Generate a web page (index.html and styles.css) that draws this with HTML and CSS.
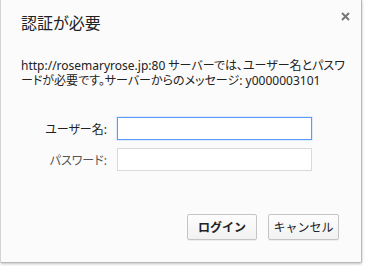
FILE: index.html
```html
<!DOCTYPE html>
<html lang="ja">
<head>
    <meta charset="UTF-8">
    <meta name="viewport" content="width=device-width, initial-scale=1.0">
    <title>認証が必要</title>
    <link rel="stylesheet" href="styles.css">
</head>
<body>
    <div class="auth-dialog">
        <div class="dialog-header">
            <h1>認証が必要</h1>
            <button class="close-button" aria-label="閉じる">
                <svg width="9" height="9" viewBox="0 0 9 9">
                    <path d="M1 1 L8 8 M8 1 L1 8" stroke="#777" stroke-width="2"/>
                </svg>
            </button>
        </div>

        <p class="message">
            http://rosemaryrose.jp:80 サーバーでは、ユーザー名とパスワードが必要です。サーバーからのメッセージ: y0000003101
        </p>

        <form class="login-form" onsubmit="return false">
            <label for="username" class="user-label">ユーザー名:</label>
            <div class="input-box active">
                <input type="text" id="username" class="text-input">
            </div>
            <label for="password" class="pass-label">パスワード:</label>
            <div class="input-box">
                <input type="password" id="password" class="text-input">
            </div>
        </form>

        <div class="button-row">
            <button class="dialog-button primary">ログイン</button>
            <button class="dialog-button">キャンセル</button>
        </div>
    </div>
</body>
</html>
```

FILE: styles.css
```css
* {
    box-sizing: border-box;
    margin: 0;
    padding: 0;
}

body {
    font-family: 'Noto Sans', 'Noto Sans CJK JP', sans-serif;
    font-feature-settings: "palt";
    background: #ffffff;
    color: #222;
    width: 365px;
    height: 266px;
    overflow: hidden;
}

.auth-dialog {
    width: 362px;
    height: 263px;
    background: #fbfbfb;
    border-left: 1px solid #d4d4d4;
    border-right: 1px solid #b8b8b8;
    border-bottom: 1px solid #b8b8b8;
    border-radius: 0 0 2px 2px;
    box-shadow: 0 1px 3px rgba(0, 0, 0, 0.25);
    padding: 0 22px 0 20px;
    display: flex;
    flex-direction: column;
}

.dialog-header {
    display: flex;
    justify-content: space-between;
    align-items: flex-start;
    padding-top: 12px;
    margin-right: -12px;
}

h1 {
    font-size: 16px;
    font-weight: 400;
    line-height: 22px;
    color: #222;
}

.close-button {
    background: none;
    border: none;
    width: 12px;
    height: 12px;
    margin-top: -2px;
    display: flex;
    align-items: center;
    justify-content: center;
    cursor: pointer;
}

.message {
    font-size: 12px;
    line-height: 15px;
    color: #222;
    margin-top: 24px;
    margin-right: -14px;
}

.login-form {
    display: grid;
    grid-template-columns: 86px 195px;
    column-gap: 10px;
    row-gap: 8px;
    align-items: center;
    margin-top: 29px;
}

.login-form label {
    font-size: 12px;
    text-align: right;
}

.user-label {
    color: #222;
}

.pass-label {
    color: #555;
}

.input-box {
    height: 23px;
    background: #fff;
    border: 1px solid #d9d9d9;
    display: flex;
}

.input-box.active {
    border-color: #5b9bff;
    box-shadow: 0 0 0 0.5px rgba(91, 155, 255, 0.35);
}

.text-input {
    -webkit-appearance: none;
    appearance: none;
    flex: 1;
    min-width: 0;
    border: none;
    background: transparent;
    font-size: 12px;
    padding: 0 4px;
    outline: none;
}

.button-row {
    display: flex;
    justify-content: flex-end;
    gap: 11px;
    margin-top: 43px;
}

.dialog-button {
    width: 70px;
    height: 26px;
    font-family: inherit;
    font-size: 12px;
    color: #222;
    background: linear-gradient(#fdfdfd, #f1f1f1);
    border: 1px solid #c4c4c4;
    border-radius: 2px;
    box-shadow: 0 1px 0 rgba(0, 0, 0, 0.05);
}

.dialog-button + .dialog-button {
    width: 71px;
}

.dialog-button.primary {
    font-weight: 700;
}
```
